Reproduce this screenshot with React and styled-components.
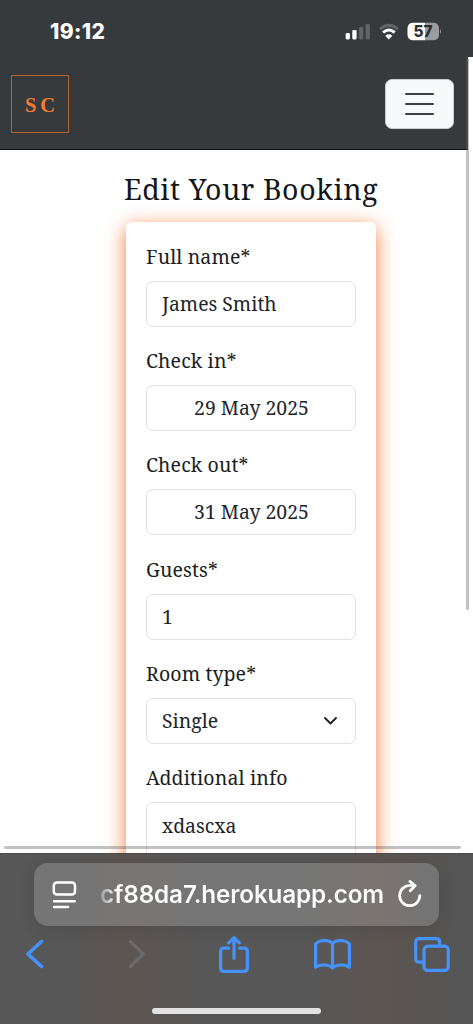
import React from "react";
import styled, { createGlobalStyle } from "styled-components";

const GlobalStyle = createGlobalStyle`
  * { box-sizing: border-box; }
  body { margin: 0; background: #fff; }
`;

const serif = `"Noto Serif", "DejaVu Serif Condensed", "DejaVu Serif", serif`;

const Screen = styled.div`
  position: relative;
  width: 473px;
  height: 1024px;
  display: flex;
  flex-direction: column;
  overflow: hidden;
  background: #fff;
`;

const StatusBar = styled.header`
  height: 57px;
  flex: none;
  display: flex;
  align-items: center;
  justify-content: space-between;
  padding: 6px 31px 0 50px;
  background: #373a3c;
`;

const Clock = styled.time`
  font: 800 21px/24px Inter, sans-serif;
  letter-spacing: 0.4px;
  color: #fff;
`;

const StatusIcons = styled.svg`
  display: block;
  width: 98px;
  height: 20px;
  margin-top: -1px;
`;

const BatteryText = styled.text`
  font: 800 16.5px Inter, sans-serif;
  fill: #2c2f31;
`;

const Navbar = styled.nav`
  width: 468px;
  height: 93px;
  flex: none;
  display: flex;
  align-items: center;
  justify-content: space-between;
  padding: 0 14px 0 11px;
  background: #373a3c;
  border-bottom: 1px solid #111;
`;

const Logo = styled.div`
  width: 58px;
  height: 58px;
  margin-top: 2px;
  display: flex;
  align-items: center;
  justify-content: center;
  border: 1.5px solid #b9602f;
  color: #f37a32;
  font: 700 20.5px/24px "Liberation Serif", serif;
  gap: 4px;
  padding-top: 2px;
`;

const MenuButton = styled.button`
  width: 69px;
  height: 50px;
  padding: 0;
  margin-top: 1px;
  display: flex;
  flex-direction: column;
  align-items: center;
  justify-content: center;
  gap: 8px;
  background: #f8f9fa;
  border: 1px solid #c9cccf;
  border-radius: 7px;
`;

const MenuLine = styled.span`
  width: 29px;
  height: 2px;
  border-radius: 1px;
  background: #3d4043;
`;

const Page = styled.main`
  height: 703px;
  flex: none;
  display: flex;
  flex-direction: column;
  align-items: center;
  padding-left: 29px;
  overflow: hidden;
`;

const Title = styled.h1`
  margin: 19px 0 13px;
  font: 400 28.5px/40px ${serif};
  letter-spacing: 0.6px;
  white-space: nowrap;
  color: #14171a;
`;

const Card = styled.form`
  width: 250px;
  height: 760px;
  flex: none;
  padding: 19.6px 20px 0;
  background: #fff;
  border-radius: 6px;
  box-shadow: 0 5px 20px #f27c3a;
`;

const Field = styled.div`
  height: 104.35px;
`;

const Label = styled.label`
  display: block;
  height: 39px;
  font: 400 19.5px/30px ${serif};
  letter-spacing: 0.12px;
  white-space: nowrap;
  color: #1b1e21;
`;

const Control = styled.div`
  height: ${(p) => (p.$tall ? 110 : 46)}px;
  display: flex;
  align-items: ${(p) => (p.$tall ? "flex-start" : "center")};
  justify-content: ${(p) => (p.$center ? "center" : "space-between")};
  padding: ${(p) => (p.$tall ? "8px 15px" : p.$center ? "0 15px 0 16px" : "0 17px 0 15px")};
  border: 1px solid #dee2e6;
  border-radius: 7px;
  font: 400 19.4px/30px ${serif};
  white-space: nowrap;
  color: #212529;
`;

const ScrollThumb = styled.div`
  position: absolute;
  border-radius: 2px;
  background: rgba(100, 100, 100, 0.4);
  ${(p) =>
    p.$vertical
      ? "left: 466px; top: 58px; width: 3px; height: 552px;"
      : "left: 4px; top: 846px; width: 457px; height: 3px;"}
`;

const BrowserBar = styled.footer`
  height: 171px;
  flex: none;
  display: flex;
  flex-direction: column;
  align-items: center;
  padding-top: 9px;
  border-top: 1px solid #4a4a4a;
  background: linear-gradient(90deg, #575757 0 14%, #5c5552 26%, #575757 42% 66%, #5c5552 82%, #555 96%);
`;

const AddressBar = styled.div`
  width: 405px;
  height: 63px;
  flex: none;
  display: flex;
  align-items: center;
  padding: 0 16px 0 18px;
  border-radius: 14px;
  background: linear-gradient(90deg, #757575 0 15%, #797573 24%, #767676 38% 66%, #7a7471 84%, #757474 96%);
  box-shadow: 0 2px 16px rgba(0, 0, 0, 0.13);
`;

const Url = styled.span`
  flex: 1;
  margin: -1px 0 0 23px;
  font: 600 24.3px/30px Inter, sans-serif;
  letter-spacing: -0.15px;
  white-space: nowrap;
  color: transparent;
  background: linear-gradient(90deg, #999 0, #fff 17px);
  background-clip: text;
  -webkit-background-clip: text;
`;

const Icon = styled.svg`
  display: block;
  flex: none;
  width: ${(p) => p.$w}px;
  height: ${(p) => p.$h}px;
  fill: none;
  stroke: ${(p) => p.$color || "#4592fb"};
  stroke-width: ${(p) => p.$stroke || 3.2};
  stroke-linecap: round;
  stroke-linejoin: round;
`;

const Toolbar = styled.div`
  width: 473px;
  height: 60px;
  display: flex;
  align-items: center;
  justify-content: space-between;
  padding: 0 21px 4px 15px;
`;

const ToolButton = styled.span`
  width: 40px;
  display: flex;
  justify-content: center;
`;

const HomeIndicator = styled.div`
  width: 169px;
  height: 6px;
  margin-top: 22px;
  border-radius: 3px;
  background: #e2e2e2;
`;

const fields = [
  { label: "Full name*", value: "James Smith" },
  { label: "Check in*", value: "29 May 2025", center: true },
  { label: "Check out*", value: "31 May 2025", center: true },
  { label: "Guests*", value: "1" },
  { label: "Room type*", value: "Single", select: true },
  { label: "Additional info", value: "xdascxa", tall: true },
];

export default function App() {
  return (
    <Screen>
      <GlobalStyle />
      <StatusBar>
        <Clock>19:12</Clock>
        <StatusIcons viewBox="344 21 98 20">
          <g fill="#fff">
            <rect x="345.7" y="33" width="4.2" height="6.4" rx="1.3" />
            <rect x="352.3" y="30" width="4.3" height="9.4" rx="1.3" />
            <rect x="359.1" y="27" width="4.2" height="12.4" rx="1.3" fill="#626466" />
            <rect x="365.6" y="24" width="4.2" height="15.4" rx="1.3" fill="#626466" />
          </g>
          <g fill="none" strokeWidth="3">
            <path d="M380 29.2Q388.8 21.6 397.8 29.2" stroke="#626466" />
            <path d="M383.1 32.5Q388.8 27.4 394.7 32.5" stroke="#fff" />
          </g>
          <path d="M385.3 35.7Q388.8 32.8 392.4 35.7L388.8 39.5Z" fill="#fff" />
          <path d="M425 22.7H413.5Q407.5 22.7 407.5 28.5V34.5Q407.5 40.3 413.5 40.3H425Z" fill="#fff" />
          <path d="M425 22.7H433Q439 22.7 439 28.5V34.5Q439 40.3 433 40.3H425Z" fill="#9b9c9d" />
          <path d="M440 29Q442 31.5 440 34Z" fill="#9b9c9d" />
          <BatteryText x="413.4" y="37.2" textLength="19" lengthAdjust="spacingAndGlyphs">57</BatteryText>
        </StatusIcons>
      </StatusBar>

      <Navbar>
        <Logo>
          <span>S</span>
          <span>C</span>
        </Logo>
        <MenuButton aria-label="Menu">
          <MenuLine />
          <MenuLine />
          <MenuLine />
        </MenuButton>
      </Navbar>

      <Page>
        <Title>Edit Your Booking</Title>
        <Card>
          {fields.map((f) => (
            <Field key={f.label}>
              <Label>{f.label}</Label>
              <Control $center={f.center} $tall={f.tall}>
                <span>{f.value}</span>
                {f.select && (
                  <Icon $w={15} $h={10} $stroke={1.9} $color="#202327" viewBox="0 0 15 10">
                    <path d="M2 2L7.5 7.5L13 2" />
                  </Icon>
                )}
              </Control>
            </Field>
          ))}
        </Card>
      </Page>

      <BrowserBar>
        <AddressBar>
          <Icon $w={25} $h={30} $stroke={2.5} $color="#fff" viewBox="0 0 25 30">
            <rect x="1.8" y="2.5" width="21.2" height="12" rx="3" />
            <path d="M2 21.2H22.7M2 26.9H16" />
          </Icon>
          <Url>cf88da7.herokuapp.com</Url>
          <Icon $w={26} $h={30} $stroke={2.7} $color="#fff" viewBox="0 0 26 30">
            <path d="M18 5.5H12.7A10.1 10.1 0 1 0 22.8 15.6M12.9 1.4L18.2 5.7L13.2 10.8" />
          </Icon>
        </AddressBar>
        <Toolbar>
          <ToolButton>
            <Icon $w={21} $h={32} $stroke={3.6} viewBox="0.5 0 21 32">
              <path d="M17 3.5L3.5 16L17 28.5" />
            </Icon>
          </ToolButton>
          <ToolButton>
            <Icon $w={21} $h={32} $color="#6c6b6a" viewBox="-3 0 21 32">
              <path d="M3.5 3.5L16.3 16L3.5 28.5" />
            </Icon>
          </ToolButton>
          <ToolButton>
            <Icon $w={30} $h={37} viewBox="0 0 30 37">
              <path d="M9.6 12.2H5Q1.6 12.2 1.6 15.6V32Q1.6 35.4 5 35.4H25Q28.4 35.4 28.4 32V15.6Q28.4 12.2 25 12.2H20.4M15 22.3V2M9.7 6.8L15 1.7L20.3 6.8" />
            </Icon>
          </ToolButton>
          <ToolButton>
            <Icon $w={37} $h={31} viewBox="0 0 37 31">
              <path d="M18.5 4.6C15 .6 6 .3 1.6 4.8V28.3C6 25 15 25.2 18.5 29C22 25.2 31 25 35.4 28.3V4.8C31 .3 22 .6 18.5 4.6V29" />
            </Icon>
          </ToolButton>
          <ToolButton>
            <Icon $w={36} $h={35} viewBox="0 0 36 35">
              <path d="M9 25.2H5.2Q1.7 25.2 1.7 21.7V5.2Q1.7 1.7 5.2 1.7H22.2Q25.7 1.7 25.7 5.2V8.5" />
              <rect x="10" y="9.2" width="24.3" height="24.2" rx="3.7" />
            </Icon>
          </ToolButton>
        </Toolbar>
        <HomeIndicator />
      </BrowserBar>
      <ScrollThumb $vertical />
      <ScrollThumb />
    </Screen>
  );
}
